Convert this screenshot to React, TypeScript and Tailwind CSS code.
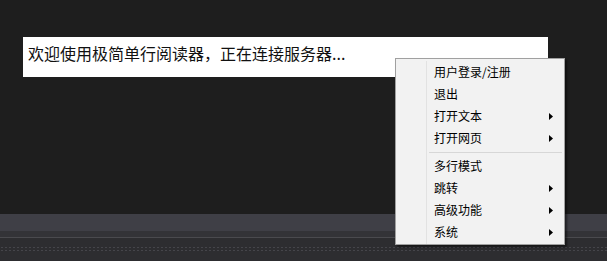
import React from "react";

const Arrow = () => (
  <svg width="4" height="7" viewBox="0 0 4 7" className="block">
    <path d="M0 0 L4 3.5 L0 7 Z" fill="#000" />
  </svg>
);

type Item = { label: string; sub?: boolean } | { sep: true };

const items: Item[] = [
  { label: "用户登录/注册" },
  { label: "退出" },
  { label: "打开文本", sub: true },
  { label: "打开网页", sub: true },
  { sep: true },
  { label: "多行模式" },
  { label: "跳转", sub: true },
  { label: "高级功能", sub: true },
  { label: "系统", sub: true },
];

export default function App() {
  const font = { fontFamily: '"Noto Sans CJK SC", "Noto Sans", sans-serif' };
  return (
    <div className="relative w-[607px] h-[261px] bg-[#1e1e1e] flex flex-col overflow-hidden" style={font}>
      <div className="flex-1 pt-[37px] pl-[23px]">
        <div className="w-[525px] h-[40px] bg-white flex items-start pl-[5px] pt-[5px]">
          <span className="text-[16px] leading-[22px] text-[#111]">欢迎使用极简单行阅读器，正在连接服务器...</span>
        </div>
      </div>
      <div className="h-[17px] bg-[#3f3f46]" />
      <div className="h-[6px] bg-[#333337]" />
      <div className="h-[1px] bg-[#4a4a4e]" />
      <div className="h-[23px] bg-[#2d2d30] pt-[8px]">
        <div className="h-[5px] bg-[radial-gradient(circle,#45454a_0.8px,transparent_1px)] bg-[length:4px_3px]" />
      </div>

      <div className="absolute left-[395px] top-[58px] w-[170px] h-[187px] bg-[#f2f2f2] border border-[#a0a0a0] shadow-[2px_2px_2px_rgba(0,0,0,0.5)] flex pt-[2px]">
        <div className="w-[31px] shrink-0 border-r border-[#e2e2e2]" />
        <div className="flex-1 flex flex-col pr-[2px]">
          {items.map((it, i) =>
            "sep" in it ? (
              <div key={i} className="h-[6px] flex items-center pl-[2px]">
                <div className="h-[1px] w-full bg-[#d7d7d7]" />
              </div>
            ) : (
              <div key={i} className="h-[22px] flex items-center pl-[7px] pr-[9px] justify-between">
                <span className="text-[12px] leading-[16px] text-black">{it.label}</span>
                {it.sub && <Arrow />}
              </div>
            )
          )}
        </div>
      </div>
    </div>
  );
}
